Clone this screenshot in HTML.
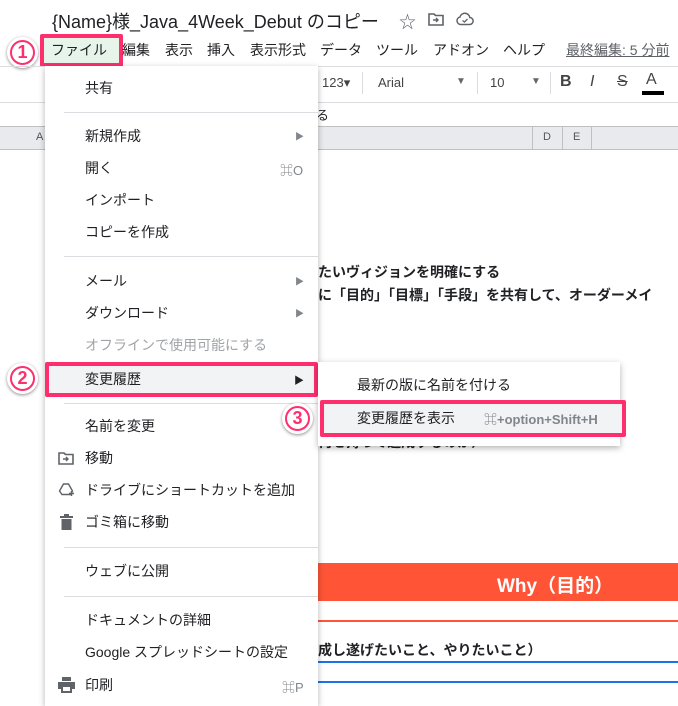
<!DOCTYPE html>
<html><head><meta charset="utf-8"><style>
*{margin:0;padding:0;box-sizing:border-box}
body{width:678px;height:703px;overflow:hidden;background:#fff;position:relative;font-family:"Liberation Sans","Noto Sans CJK JP",sans-serif;color:#202124}
.a{position:absolute;white-space:nowrap}
.mi{position:absolute;left:85px;font-size:14px;color:#202124;transform:translateY(-50%)}
.sep{position:absolute;left:64px;width:254px;height:1px;background:#dadce0}
.arr{position:absolute;left:295px;font-size:9px;color:#80868b;transform:translateY(-50%)}
.circ{position:absolute;width:31px;height:31px;border-radius:50%;background:#fff;box-shadow:0 1px 3px rgba(0,0,0,.45)}
.circ span{position:absolute;left:3px;top:3px;width:25px;height:25px;border-radius:50%;border:2.5px solid #ff2f6e;color:#ff2f6e;font-weight:bold;font-size:18px;text-align:center;line-height:20px;font-family:"Liberation Sans",sans-serif}
.mb{position:absolute;top:40px;font-size:14px}
</style></head><body>
<div class="a" style="left:52px;top:8px;font-size:18px">{Name}様_Java_4Week_Debut のコピー</div>
<div class="a" style="left:399px;top:8px;font-size:17px;color:#5f6368">☆</div>
<svg class="a" style="left:428px;top:12px" width="16" height="14" viewBox="0 0 16 14"><path d="M1 2h5l1.5 1.5H15V13H1z" fill="none" stroke="#5f6368" stroke-width="1.6"/><path d="M5 8h5M8 6l2 2-2 2" stroke="#5f6368" stroke-width="1.4" fill="none"/></svg>
<svg class="a" style="left:456px;top:12px" width="18" height="14" viewBox="0 0 18 14"><path d="M4.5 12.5h9a3.5 3.5 0 0 0 .3-7A5 5 0 0 0 4 5 3.8 3.8 0 0 0 4.5 12.5z" fill="none" stroke="#5f6368" stroke-width="1.5"/><path d="M6.5 8.5l2 1.5 3-3" stroke="#5f6368" stroke-width="1.3" fill="none"/></svg>
<div class="a" style="left:40px;top:34px;width:83px;height:33px;border:4px solid #ff2f6e;background:#e6f4ea;border-radius:2px"></div>
<div class="mb" style="left:51px">ファイル</div>
<div class="mb" style="left:122px">編集</div>
<div class="mb" style="left:165px">表示</div>
<div class="mb" style="left:207px">挿入</div>
<div class="mb" style="left:250px">表示形式</div>
<div class="mb" style="left:320px">データ</div>
<div class="mb" style="left:376px">ツール</div>
<div class="mb" style="left:433px">アドオン</div>
<div class="mb" style="left:503px">ヘルプ</div>
<div class="mb" style="left:566px;color:#5f6368;text-decoration:underline">最終編集: 5 分前</div>
<div class="circ" style="left:7px;top:37px"><span>1</span></div>
<div class="a" style="left:0;top:66px;width:678px;height:1px;background:#dadce0"></div>
<div class="a" style="left:322px;top:75px;font-size:13px;color:#444">123▾</div>
<div class="a" style="left:362px;top:72px;width:1px;height:22px;background:#dadce0"></div>
<div class="a" style="left:378px;top:75px;font-size:13px;color:#444">Arial</div>
<div class="a" style="left:456px;top:76px;font-size:10px;color:#666">▼</div>
<div class="a" style="left:477px;top:72px;width:1px;height:22px;background:#dadce0"></div>
<div class="a" style="left:490px;top:75px;font-size:13px;color:#444">10</div>
<div class="a" style="left:531px;top:76px;font-size:10px;color:#666">▼</div>
<div class="a" style="left:550px;top:72px;width:1px;height:22px;background:#dadce0"></div>
<div class="a" style="left:560px;top:73px;font-size:16px;font-weight:bold;color:#444">B</div>
<div class="a" style="left:590px;top:73px;font-size:16px;font-style:italic;color:#444">I</div>
<div class="a" style="left:617px;top:73px;font-size:16px;text-decoration:line-through;color:#444">S</div>
<div class="a" style="left:646px;top:71px;font-size:16px;color:#444">A</div>
<div class="a" style="left:642px;top:91px;width:22px;height:4px;background:#000"></div>
<div class="a" style="left:0;top:102px;width:678px;height:1px;background:#dadce0"></div>
<div class="a" style="left:316px;top:105px;font-size:13px">る</div>
<div class="a" style="left:0;top:126px;width:678px;height:24px;background:#e8eaed;border-top:1px solid #c0c0c0;border-bottom:1px solid #c0c0c0"></div>
<div class="a" style="left:532px;top:126px;width:1px;height:24px;background:#c0c0c0"></div>
<div class="a" style="left:562px;top:126px;width:1px;height:24px;background:#c0c0c0"></div>
<div class="a" style="left:591px;top:126px;width:1px;height:24px;background:#c0c0c0"></div>
<div class="a" style="left:543px;top:131px;font-size:11px;color:#555">D</div>
<div class="a" style="left:573px;top:131px;font-size:11px;color:#555">E</div>
<div class="a" style="left:36px;top:131px;font-size:11px;color:#555">A</div>
<div class="a" style="left:318px;top:262px;font-size:14px;font-weight:bold">たいヴィジョンを明確にする</div>
<div class="a" style="left:318px;top:285px;font-size:14px;font-weight:bold">に「目的」「目標」「手段」を共有して、オーダーメイ</div>
<div class="a" style="left:318px;top:432px;font-size:14px;font-weight:bold;">何を持って達成するのか）</div>
<div class="a" style="left:318px;top:563px;width:360px;height:38px;background:#ff5436"></div>
<div class="a" style="left:497px;top:571px;font-size:19px;font-weight:bold;color:#fff">Why（目的）</div>
<div class="a" style="left:318px;top:620px;width:360px;height:2px;background:#ff5436"></div>
<div class="a" style="left:318px;top:640px;font-size:14px;font-weight:bold">成し遂げたいこと、やりたいこと）</div>
<div class="a" style="left:318px;top:661px;width:360px;height:2px;background:#1a73e8"></div>
<div class="a" style="left:318px;top:681px;width:360px;height:2px;background:#1a73e8"></div>
<div class="a" style="left:45px;top:66px;width:273px;height:640px;background:#fff;box-shadow:0 2px 6px rgba(0,0,0,.3)"></div>
<div class="mi" style="top:88px">共有</div>
<div class="sep" style="top:112px"></div>
<div class="mi" style="top:136px">新規作成</div><div class="arr" style="top:136px">▶</div>
<div class="mi" style="top:168px">開く</div><div class="a" style="left:280px;top:160px;font-size:13px;color:#80868b">⌘O</div>
<div class="mi" style="top:200px">インポート</div>
<div class="mi" style="top:232px">コピーを作成</div>
<div class="sep" style="top:256px"></div>
<div class="mi" style="top:281px">メール</div><div class="arr" style="top:281px">▶</div>
<div class="mi" style="top:313px">ダウンロード</div><div class="arr" style="top:313px">▶</div>
<div class="mi" style="top:345px;color:#a0a4a8">オフラインで使用可能にする</div>
<div class="a" style="left:45px;top:362px;width:273px;height:35px;border:4px solid #ff2f6e;background:#f1f3f4;border-radius:2px"></div>
<div class="mi" style="top:379px">変更履歴</div><div class="a" style="left:294px;top:372px;font-size:10px;color:#202124">▶</div>
<div class="circ" style="left:7px;top:363px"><span>2</span></div>
<div class="sep" style="top:403px"></div>
<div class="mi" style="top:426px">名前を変更</div>
<svg class="a" style="left:58px;top:451px" width="16" height="14" viewBox="0 0 16 14"><path d="M1 2h5l1.5 1.5H15V13H1z" fill="none" stroke="#5f6368" stroke-width="1.6"/><path d="M5 8h5M8 6l2 2-2 2" stroke="#5f6368" stroke-width="1.4" fill="none"/></svg>
<div class="mi" style="top:458px">移動</div>
<svg class="a" style="left:58px;top:482px" width="17" height="16" viewBox="0 0 17 16"><path d="M5.5 2h5l4 7-2 3.5H4L1.5 9z" fill="none" stroke="#5f6368" stroke-width="1.4"/><path d="M11 11.5h5M13.5 9v5" stroke="#5f6368" stroke-width="1.4"/></svg>
<div class="mi" style="top:490px">ドライブにショートカットを追加</div>
<svg class="a" style="left:60px;top:514px" width="13" height="16" viewBox="0 0 13 16"><path d="M0 2h13v2H0zM4 0h5v2H4zM1.5 5h10v11h-10z" fill="#5f6368"/></svg>
<div class="mi" style="top:522px">ゴミ箱に移動</div>
<div class="sep" style="top:547px"></div>
<div class="mi" style="top:571px">ウェブに公開</div>
<div class="sep" style="top:596px"></div>
<div class="mi" style="top:620px">ドキュメントの詳細</div>
<div class="mi" style="top:652px">Google スプレッドシートの設定</div>
<svg class="a" style="left:58px;top:677px" width="17" height="16" viewBox="0 0 17 16"><path d="M4 0h9v4H4zM0 5h17v7h-3v4H3v-4H0z" fill="#5f6368"/><path d="M5 10h7v4H5z" fill="#fff"/></svg>
<div class="mi" style="top:685px">印刷</div><div class="a" style="left:282px;top:677px;font-size:13px;color:#80868b">⌘P</div>
<div class="a" style="left:318px;top:362px;width:302px;height:84px;background:#fff;box-shadow:0 2px 6px rgba(0,0,0,.3)"></div>
<div class="a" style="left:357px;top:375px;font-size:14px">最新の版に名前を付ける</div>
<div class="a" style="left:320px;top:400px;width:306px;height:37px;border:4px solid #ff2f6e;background:#f1f3f4;border-radius:2px"></div>
<div class="a" style="left:357px;top:408px;font-size:14px">変更履歴を表示</div>
<div class="a" style="left:484px;top:409px;font-size:13px;color:#80868b;font-weight:bold">⌘+option+Shift+H</div>
<div class="circ" style="left:282px;top:403px"><span>3</span></div>
</body></html>
